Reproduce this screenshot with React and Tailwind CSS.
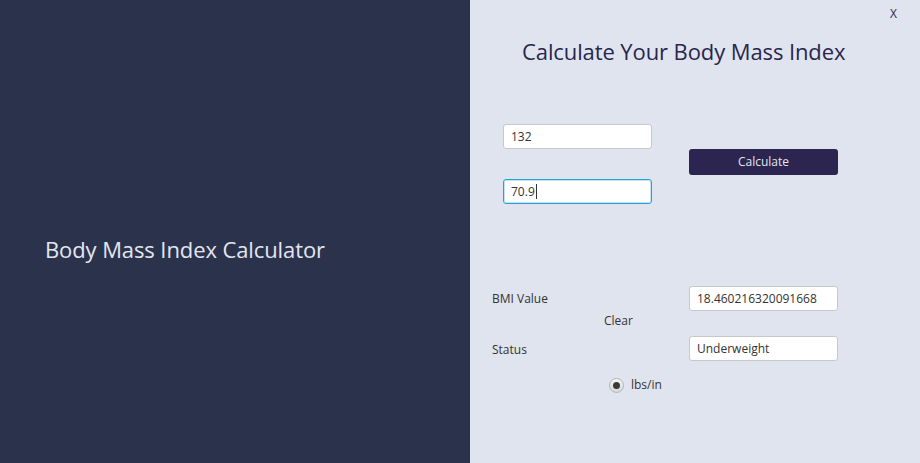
import React from "react";

const font = { fontFamily: '"Open Sans", "Noto Sans", sans-serif' };

const Field = ({ value, focused }) => (
  <div
    className={
      focused
        ? "w-[149px] h-[25px] rounded-[3px] border border-[#2a9fd6] bg-white shadow-[inset_0_0_0_1px_#bfe3f5] flex items-center px-[7px] text-[12px] text-[#333]"
        : "w-[149px] h-[25px] rounded-[3px] border border-[#c8c8cc] bg-white flex items-center px-[7px] text-[12px] text-[#333]"
    }
  >
    <span>{value}</span>
    {focused && <span className="w-px h-[15px] bg-[#333] ml-px" />}
  </div>
);

export default function App() {
  return (
    <div className="flex w-[920px] h-[463px] overflow-hidden" style={font}>
      <div className="w-[470px] h-full bg-[#2b324c] flex items-center pl-[45px] pt-[36px]">
        <h1 className="text-[22px] text-[#e3e6f0] tracking-[-0.1px]">Body Mass Index Calculator</h1>
      </div>

      <div className="flex-1 h-full bg-[#e0e4ee] flex flex-col">
        <div className="flex justify-end pr-[23px] pt-[8px] text-[12px] text-[#2b2a4c] leading-none h-[16px]">
          X
        </div>
        <h2 className="ml-[52px] mt-[21px] text-[22px] tracking-[-0.1px] text-[#28264d] leading-[28px]">
          Calculate Your Body Mass Index
        </h2>

        <div className="flex mt-[59px] ml-[33px]">
          <div className="flex flex-col gap-[30px]">
            <Field value="132" />
            <Field value="70.9" focused />
          </div>
          <div className="ml-[37px] mt-[24px]">
            <button className="w-[149px] h-[26px] rounded-[3px] bg-[#2b2550] text-[12px] text-[#e3e6f0]">
              Calculate
            </button>
          </div>
        </div>

        <div className="flex mt-[82px] ml-[22px] text-[12px] text-[#333]">
          <div className="w-[197px] flex flex-col">
            <div className="h-[25px] flex items-center">BMI Value</div>
            <div className="h-[25px] flex items-center pl-[112px] pb-[6px]">Clear</div>
            <div className="h-[25px] mt-[1px] flex items-center">Status</div>
            <div className="mt-[14px] flex items-center gap-[7px] pl-[117px]">
              <span className="w-[15px] h-[15px] rounded-full border border-[#b4b4b4] bg-gradient-to-b from-[#f6f6f6] to-[#d8d8d8] flex items-center justify-center">
                <span className="w-[7px] h-[7px] rounded-full bg-[#3a3a3a]" />
              </span>
              <span>lbs/in</span>
            </div>
          </div>
          <div className="flex flex-col">
            <div className="w-[149px] h-[25px] rounded-[3px] border border-[#c8c8cc] bg-white flex items-center px-[7px]">
              18.460216320091668
            </div>
            <div className="w-[149px] h-[25px] mt-[25px] rounded-[3px] border border-[#c8c8cc] bg-white flex items-center px-[7px]">
              Underweight
            </div>
          </div>
        </div>
      </div>
    </div>
  );
}
